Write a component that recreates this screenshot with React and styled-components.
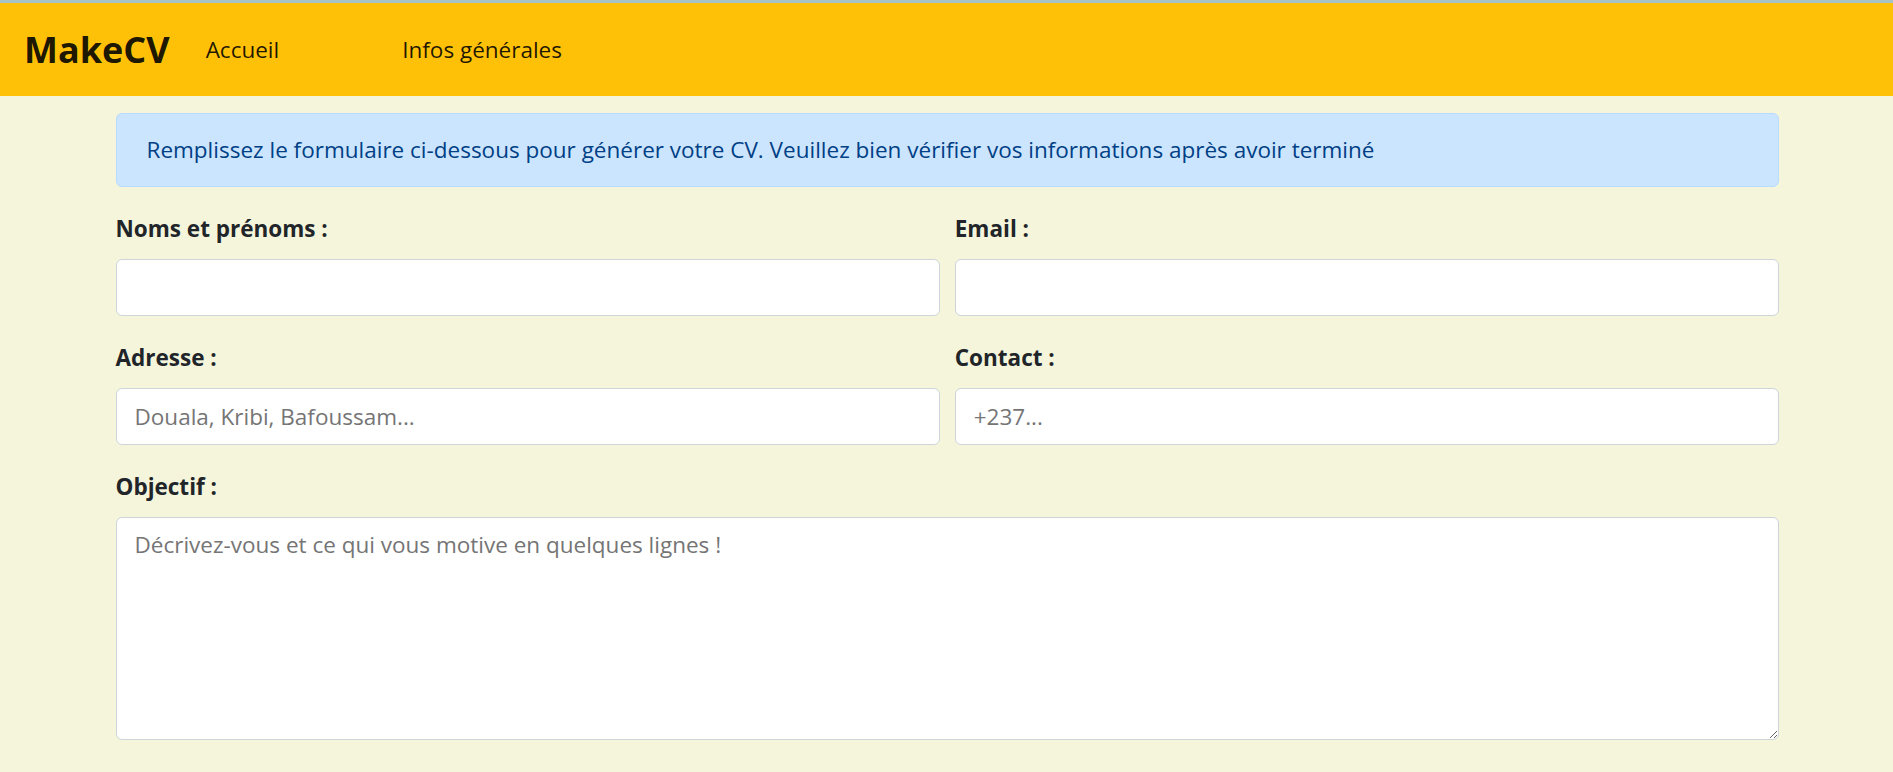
import React from "react";
import styled, { createGlobalStyle } from "styled-components";

const GlobalStyle = createGlobalStyle`
  body {
    margin: 0;
    background-color: #f5f5dc;
    font-family: "Segoe UI", "Open Sans", "Liberation Sans", sans-serif;
    font-size: 22.5px;
    line-height: 36px;
    color: #212529;
  }
  * {
    box-sizing: border-box;
  }
`;

const Navbar = styled.nav`
  display: flex;
  align-items: center;
  background-color: #ffc107;
  border-top: 3px solid #a6c4c6;
  padding: 12px 24px;
`;

const Brand = styled.a`
  font-size: 36px;
  font-weight: bold;
  line-height: 54px;
  padding: 7.5px 0;
  margin-right: 24px;
  color: rgba(0, 0, 0, 0.9);
`;

const NavList = styled.div`
  display: flex;
  gap: 99px;
`;

const NavLink = styled.a`
  padding: 0 12px;
  color: rgba(0, 0, 0, 0.88);
`;

const Container = styled.main`
  max-width: 1710px;
  margin: 0 auto;
  padding: 17px 22.5px 0 24px;
`;

const Alert = styled.div`
  padding: 18px 30px;
  margin-bottom: 24px;
  border: 1px solid #b8daff;
  border-radius: 6px;
  background-color: #cce5ff;
  color: #004085;
`;

const FormRow = styled.div`
  display: grid;
  grid-template-columns: 1fr 1fr;
  column-gap: 15px;
`;

const Group = styled.div`
  margin-bottom: 24px;
`;

const Label = styled.label`
  display: block;
  font-weight: bold;
  margin-bottom: 12px;
`;

const fieldStyle = `
  display: block;
  width: 100%;
  padding: 9px 18px;
  font-family: inherit;
  font-size: 22.5px;
  line-height: 36px;
  color: #495057;
  background-color: white;
  border: 1px solid #ced4da;
  border-radius: 6px;
  ::placeholder {
    color: #6c757d;
  }
`;

const Input = styled.input`
  ${fieldStyle}
  height: 57px;
`;

const TextArea = styled.textarea`
  ${fieldStyle}
  height: 223px;
`;

function App() {
  return (
    <>
      <GlobalStyle />
      <Navbar>
        <Brand>MakeCV</Brand>
        <NavList>
          <NavLink>Accueil</NavLink>
          <NavLink>Infos générales</NavLink>
        </NavList>
      </Navbar>
      <Container>
        <Alert>
          Remplissez le formulaire ci-dessous pour générer votre CV. Veuillez
          bien vérifier vos informations après avoir terminé
        </Alert>
        <FormRow>
          <Group>
            <Label>Noms et prénoms :</Label>
            <Input type="text" />
          </Group>
          <Group>
            <Label>Email :</Label>
            <Input type="email" />
          </Group>
          <Group>
            <Label>Adresse :</Label>
            <Input type="text" placeholder="Douala, Kribi, Bafoussam..." />
          </Group>
          <Group>
            <Label>Contact :</Label>
            <Input type="text" placeholder="+237..." />
          </Group>
        </FormRow>
        <Group>
          <Label>Objectif :</Label>
          <TextArea placeholder="Décrivez-vous et ce qui vous motive en quelques lignes !" />
        </Group>
      </Container>
    </>
  );
}

export default App;
